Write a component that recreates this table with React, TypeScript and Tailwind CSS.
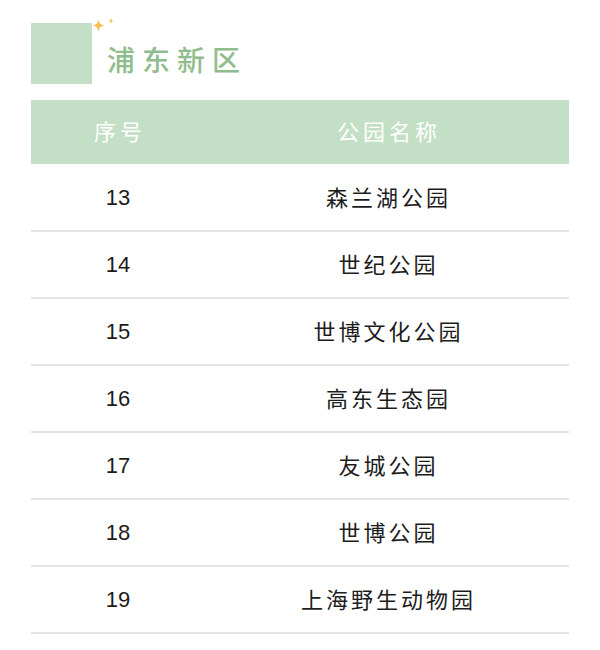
const parks = [
  { no: 13, name: '森兰湖公园' },
  { no: 14, name: '世纪公园' },
  { no: 15, name: '世博文化公园' },
  { no: 16, name: '高东生态园' },
  { no: 17, name: '友城公园' },
  { no: 18, name: '世博公园' },
  { no: 19, name: '上海野生动物园' },
];

const font = "font-['Noto_Sans_CJK_SC','Noto_Sans',sans-serif]";

function Sparkle({ size, className }: { size: number; className?: string }) {
  return (
    <svg width={size} height={size} viewBox="0 0 20 20" className={className}>
      <path d="M10 0 C11 7 13 9 20 10 C13 11 11 13 10 20 C9 13 7 11 0 10 C7 9 9 7 10 0 Z" fill="#f2c14e" />
    </svg>
  );
}

export default function App() {
  return (
    <div className={`w-[600px] h-[650px] bg-white pt-[23px] px-[31px] ${font}`}>
      <div className="relative flex items-center h-[61px]">
        <div className="w-[61px] h-[61px] bg-[#c3e0c6]" />
        <span className="ml-[15px] mt-[11px] text-[28px] leading-none tracking-[7px] font-medium text-[#8fbd8d]">浦东新区</span>
        <Sparkle size={13} className="absolute left-[61px] top-[-4px]" />
        <Sparkle size={6} className="absolute left-[77px] top-[-5px]" />
      </div>
      <table className="w-[538px] mt-[16px] border-collapse">
        <thead>
          <tr className="bg-[#c3e0c6] h-[64px]">
            <th className="w-[174px] pl-[4px] pb-[3px] text-[22px] font-normal text-white tracking-[4px]">序号</th>
            <th className="pl-[4px] pb-[3px] text-[22px] font-normal text-white tracking-[4px]">公园名称</th>
          </tr>
        </thead>
        <tbody>
          {parks.map(p => (
            <tr key={p.no} className="h-[67px] border-b-2 border-[#e4e4e4]">
              <td className="text-center text-[22px] text-[#1c1c1c] font-['Liberation_Sans',sans-serif]">{p.no}</td>
              <td className="pl-[3px] pb-[2px] text-center text-[22px] text-[#1c1c1c] tracking-[3px]">{p.name}</td>
            </tr>
          ))}
        </tbody>
      </table>
    </div>
  );
}
